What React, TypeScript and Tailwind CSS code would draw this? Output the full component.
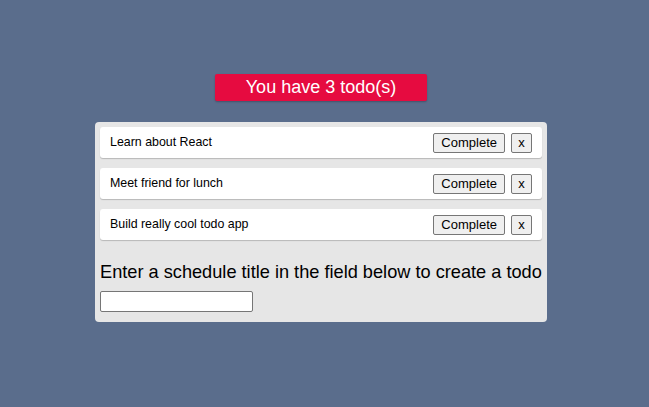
import { useState } from 'react';

const initialTodos = ['Learn about React', 'Meet friend for lunch', 'Build really cool todo app'];

export default function App() {
    const [todos, setTodos] = useState(initialTodos);
    const [value, setValue] = useState('');

    return (
        <div className="min-h-[407px] w-full bg-[#5a6d8c] pt-[74px] pr-[7px] font-['Liberation_Sans',Arial,sans-serif]">
            <div className="mx-auto flex h-[27px] w-[212px] items-center justify-center rounded-[2px] bg-[#e60b40] text-[18px] text-white shadow-[0_1px_2px_rgba(0,0,0,0.25)]">
                You have {todos.length} todo(s)
            </div>

            <div className="mx-auto mt-[21px] w-[452px] rounded-[4px] bg-[#e6e6e6] px-[5px] pt-[5px] pb-[10px]">
                <div className="flex flex-col gap-[10px]">
                    {todos.map((t, i) => (
                        <div
                            key={i}
                            className="flex h-[31px] items-center justify-between rounded-[3px] bg-white pl-[10px] pr-[10px] shadow-[0_1px_1px_rgba(0,0,0,0.2)]"
                        >
                            <span className="text-[12.4px] text-black">{t}</span>
                            <div className="flex gap-[6px]">
                                <button className="h-[20px] rounded-[2px] border border-[#767676] bg-[#efefef] px-[7px] text-[13px] leading-none text-black">
                                    Complete
                                </button>
                                <button
                                    className="h-[20px] w-[21px] rounded-[2px] border border-[#767676] bg-[#efefef] text-[13px] leading-none text-black"
                                    onClick={() => setTodos(todos.filter((_, j) => j !== i))}
                                >
                                    x
                                </button>
                            </div>
                        </div>
                    ))}
                </div>

                <p className="mt-[21px] text-[18.2px] leading-[22px] text-black whitespace-nowrap">
                    Enter a schedule title in the field below to create a todo
                </p>
                <input
                    value={value}
                    onChange={e => setValue(e.target.value)}
                    className="mt-[8px] block h-[21px] w-[153px] rounded-[2px] border border-[#767676] bg-white px-1 text-[13px] outline-none"
                />
            </div>
        </div>
    );
}
